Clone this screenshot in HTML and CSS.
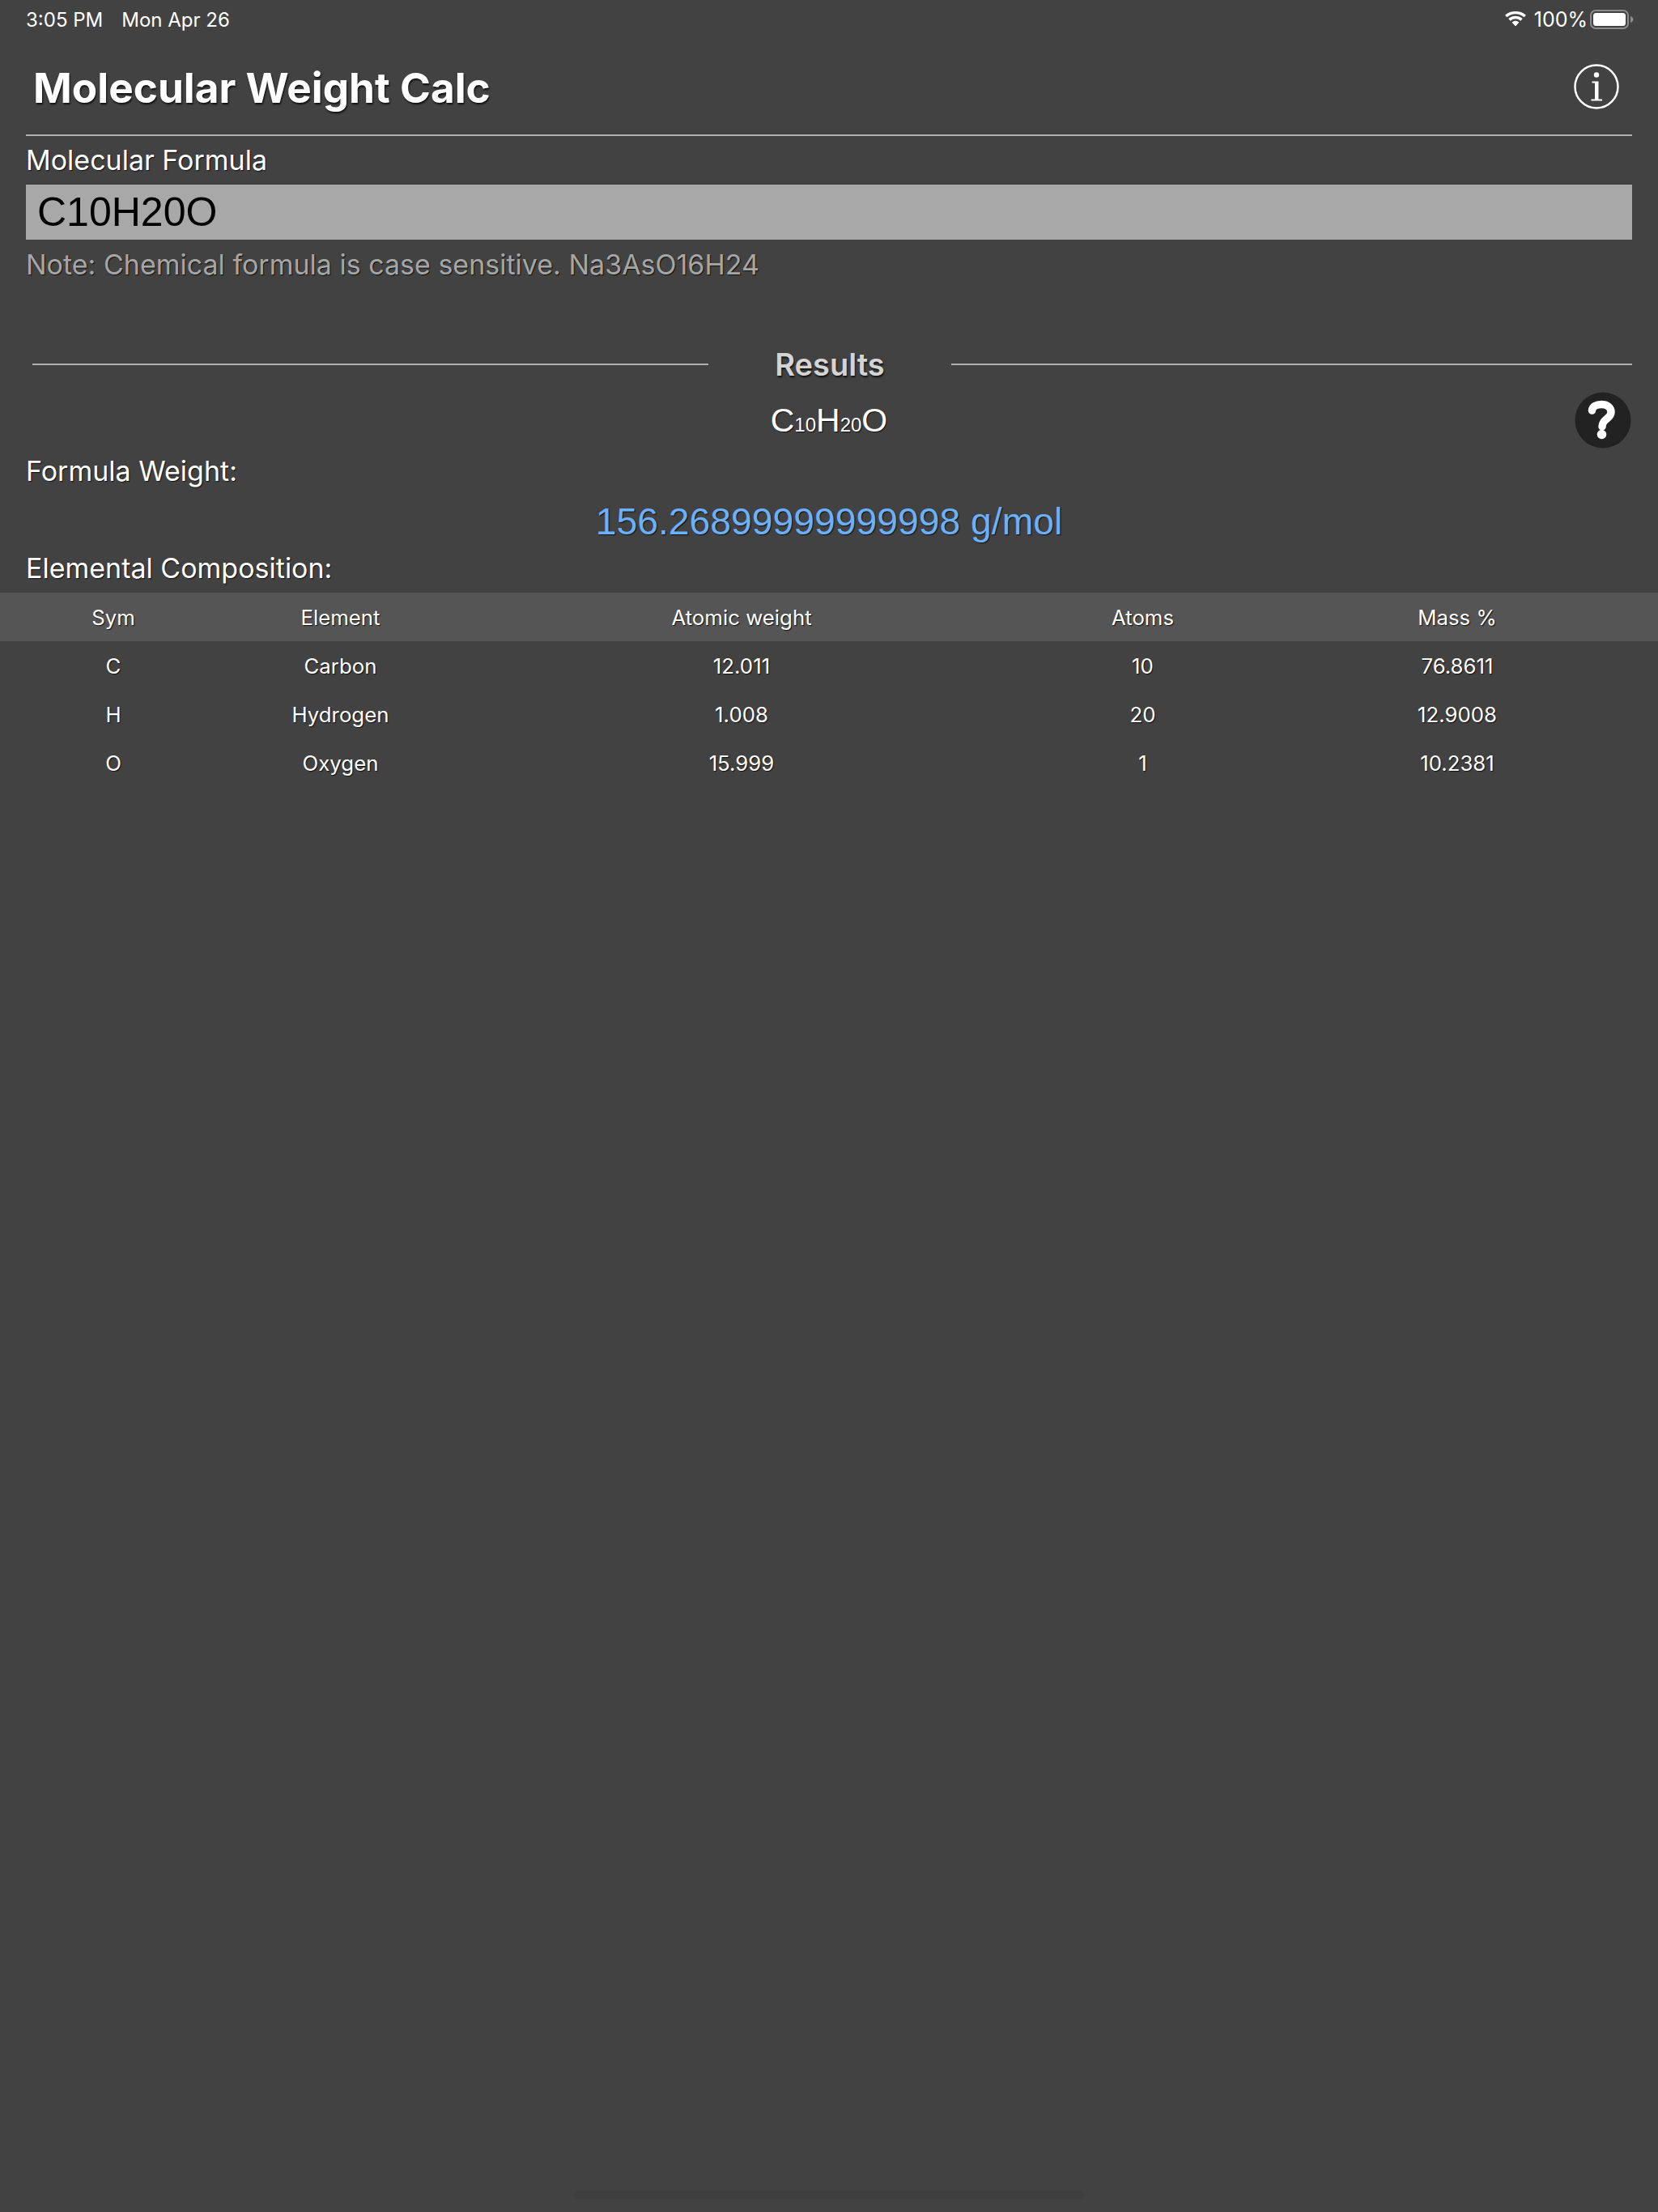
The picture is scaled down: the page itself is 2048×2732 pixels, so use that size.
FILE: index.html
```html
<!DOCTYPE html>
<html lang="en">
<head>
<meta charset="utf-8">
<title>Molecular Weight Calc</title>
<link rel="stylesheet" href="styles.css">
</head>
<body>
<div class="screen">
  <div class="status">
    <div class="status-left"><span>3:05 PM</span><span>Mon Apr 26</span></div>
    <div class="status-right">
      <svg class="wifi" width="28" height="20" viewBox="0 0 28 20"><path fill="#fff" d="M14 3.2c3.9 0 7.4 1.5 10.1 3.9.2.2.5.2.7 0l1.9-2c.2-.2.2-.5 0-.7C23.300 1.500 18.900 0 14 0S4.700 1.500 1.300 4.400c-.2.200-.2.500 0 .7l1.900 2c.2.200.5.200.7 0C6.600 4.700 10.100 3.200 14 3.200z"/><path fill="#fff" d="M14 9.300c2.200 0 4.200.8 5.800 2.200.2.200.5.200.7 0l1.900-2c.2-.2.2-.5 0-.7C20.100 6.900 17.200 5.800 14 5.800s-6.100 1.100-8.400 3c-.2.200-.2.500 0 .7l1.900 2c.2.200.5.200.7 0C9.800 10.100 11.800 9.300 14 9.300z"/><path fill="#fff" d="M14 11.800c-1.600 0-3 .6-4.100 1.500-.2.200-.2.500 0 .7l3.700 3.900c.2.200.5.200.8 0l3.700-3.900c.2-.2.2-.5 0-.7C17 12.400 15.600 11.800 14 11.800z"/></svg>
      <span>100%</span>
      <svg class="battery" width="54" height="24" viewBox="0 0 54 24"><rect x="1" y="1" width="46" height="22" rx="6" fill="none" stroke="#8c8c8c" stroke-width="2"/><rect x="4" y="4" width="40" height="16" rx="3.500" fill="#fff"/><path fill="#8c8c8c" d="M50 8c2 .5 3.500 2 3.500 4s-1.500 3.500-3.500 4z"/></svg>
    </div>
  </div>

  <header class="title-bar">
    <h1 class="title">Molecular Weight Calc</h1>
    <svg class="info" width="56" height="56" viewBox="0 0 56 56"><circle cx="28" cy="28" r="26.500" fill="none" stroke="#fff" stroke-width="2.500"/><circle cx="28" cy="13.500" r="3.200" fill="#fff"/><path fill="#fff" d="M22.500 21.500h8v22h4.500v2H21.500v-2H26V23.500h-3.500z"/></svg>
  </header>

  <section class="formula">
    <label class="label formula-label">Molecular Formula</label>
    <div class="input">C10H20O</div>
    <p class="note">Note: Chemical formula is case sensitive. Na3AsO16H24</p>
  </section>

  <div class="results-head">
    <span class="rule"></span>
    <span class="results-title">Results</span>
    <span class="rule"></span>
  </div>

  <div class="formula-row">
    <div class="chem">C<sub>10</sub>H<sub>20</sub>O</div>
    <svg class="help" width="70" height="70" viewBox="0 0 70 70"><circle cx="35" cy="35" r="34.500" fill="#222"/><path fill="none" stroke="#fff" stroke-width="9.500" stroke-linecap="round" d="M21.500 23C22 18 27 15.500 33 15.500C40 15.500 45 19 45 25C45 31 39 33 36 37C34.500 39 34 41 34 43"/><circle cx="33.500" cy="52.500" r="5.800" fill="#fff"/></svg>
  </div>

  <div class="label weight-label">Formula Weight:</div>
  <div class="weight">156.26899999999998 g/mol</div>
  <div class="label comp-label">Elemental Composition:</div>

  <div class="table">
    <div class="row head"><span>Sym</span><span>Element</span><span>Atomic weight</span><span>Atoms</span><span>Mass %</span></div>
    <div class="row"><span>C</span><span>Carbon</span><span>12.011</span><span>10</span><span>76.8611</span></div>
    <div class="row"><span>H</span><span>Hydrogen</span><span>1.008</span><span>20</span><span>12.9008</span></div>
    <div class="row"><span>O</span><span>Oxygen</span><span>15.999</span><span>1</span><span>10.2381</span></div>
  </div>

  <div class="spacer"></div>
  <div class="home"></div>
</div>
</body>
</html>
```

FILE: styles.css
```css
* { box-sizing: border-box; }
html, body { margin: 0; padding: 0; }
body { background: #424242; }
.screen {
  width: 2048px;
  height: 2732px;
  display: flex;
  flex-direction: column;
  background: #424242;
  color: #fff;
  font-family: Inter, "Liberation Sans", sans-serif;
  overflow: hidden;
}
.status {
  height: 48px;
  padding: 0 30px 0 32px;
  display: flex;
  justify-content: space-between;
  align-items: center;
  font-size: 24px;
  color: #fff;
}
.status-left { display: flex; gap: 23px; }
.status-right { display: flex; align-items: center; gap: 7px; font-size: 25px; }
.wifi { margin-right: 2px; }
.battery { margin-left: -4px; }
.title-bar {
  height: 120px;
  margin: 0 32px;
  padding: 0 0 0 9px;
  border-bottom: 2px solid #b0b0b0;
  display: flex;
  justify-content: space-between;
  align-items: center;
}
.title {
  margin: 2px 0 0;
  font-size: 51.3px;
  font-weight: 700;
  line-height: 60px;
  text-shadow: 1px 2px 2px #111;
}
.info { margin-right: 16px; }
.formula { padding: 0 32px; }
.label {
  font-size: 34px;
  line-height: 44px;
  text-shadow: 1px 1px 1px #111;
}
.formula-label { height: 60px; display: flex; align-items: center; }
.input {
  height: 68px;
  padding-left: 14px;
  background: #a8a8a8;
  color: #000;
  font-family: "Liberation Sans", sans-serif;
  font-size: 50px;
  line-height: 68px;
}
.note {
  margin: 9px 0 0;
  font-size: 34px;
  line-height: 44px;
  color: #a6a6a6;
  text-shadow: 1px 1px 1px #111;
}
.results-head {
  margin-top: 78px;
  padding: 0 32px 0 40px;
  height: 44px;
  display: grid;
  grid-template-columns: 835px 300px 1fr;
  align-items: center;
}
.rule { height: 2px; background: #b0b0b0; }
.results-title {
  text-align: center;
  font-size: 38px;
  font-weight: 600;
  color: #d4d4d4;
  text-shadow: 1px 2px 2px #111;
}
.formula-row {
  height: 70px;
  margin-top: 13px;
  padding: 0 33px;
  display: flex;
  justify-content: center;
  align-items: center;
  position: relative;
}
.chem {
  font-family: "Liberation Sans", sans-serif;
  font-size: 41px;
  text-shadow: 1px 1px 1px #111;
}
.chem sub { font-size: 24px; vertical-align: baseline; }
.help {
  position: absolute;
  right: 33px;
  top: 0;
}
.weight-label { margin-top: 6px; padding-left: 32px; }
.weight {
  margin-top: 10px;
  height: 60px;
  line-height: 60px;
  text-align: center;
  font-family: "Liberation Sans", sans-serif;
  font-size: 46.3px;
  color: #6cb0fa;
  text-shadow: 1px 1px 1px #111;
}
.comp-label { margin-top: 6px; padding-left: 32px; }
.table { margin-top: 8px; }
.row {
  height: 60px;
  display: grid;
  grid-template-columns: 280px 281px 710px 281px 496px;
  align-items: center;
  text-align: center;
  font-size: 25.8px;
  text-shadow: 1px 1px 1px #111;
}
.row.head { background: #555; }
.spacer { flex: 1; }
.home {
  width: 630px;
  height: 10px;
  margin: 0 auto 16px;
  border-radius: 5px;
  background: #3e3e3e;
}
```
